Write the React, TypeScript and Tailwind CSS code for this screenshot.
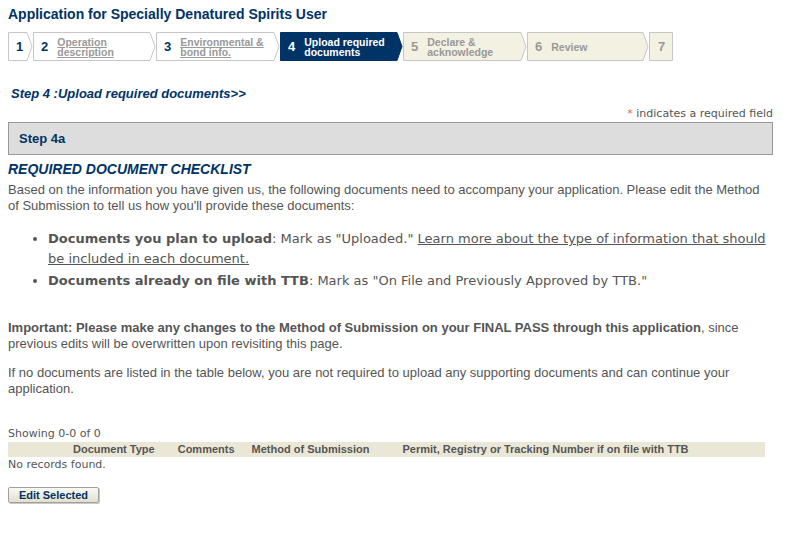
const arial = "font-['Liberation_Sans',Arial,sans-serif]";
const verdana = "font-['DejaVu_Sans',Verdana,sans-serif]";

type Step = { n: string; label?: string; w: number; kind: "done" | "current" | "todo"; last?: boolean };

const steps: Step[] = [
  { n: "1", w: 25, kind: "done" },
  { n: "2", label: "Operation\ndescription", w: 123, kind: "done" },
  { n: "3", label: "Environmental &\nbond info.", w: 124, kind: "done" },
  { n: "4", label: "Upload required\ndocuments", w: 123, kind: "current" },
  { n: "5", label: "Declare &\nacknowledge", w: 124, kind: "todo" },
  { n: "6", label: "Review", w: 122, kind: "todo" },
  { n: "7", w: 24, kind: "todo", last: true },
];

function Chevron({ w, kind, last }: { w: number; kind: Step["kind"]; last?: boolean }) {
  const fill = kind === "current" ? "#003366" : kind === "todo" ? "#f3f1e1" : "#ffffff";
  const stroke = kind === "current" ? "#003366" : "#c6c6c6";
  const pts = last
    ? `0.5,0.5 ${w - 0.5},0.5 ${w - 0.5},28.5 0.5,28.5`
    : `0.5,0.5 ${w - 6},0.5 ${w - 1},14.5 ${w - 6},28.5 0.5,28.5`;
  return (
    <svg className="absolute inset-0" width={w} height={29}>
      <polygon points={pts} fill={fill} stroke={stroke} strokeWidth={1} />
    </svg>
  );
}

function StepBar() {
  return (
    <div className={`flex ml-2 mt-[9px] ${arial}`}>
      {steps.map((s) => {
        const numColor =
          s.kind === "current" ? "text-white" : s.kind === "done" ? "text-[#003366]" : "text-[#999999]";
        const labelColor =
          s.kind === "current"
            ? "text-white"
            : s.kind === "done"
            ? "text-[#999999] underline"
            : "text-[#999999]";
        return (
          <div key={s.n} className="relative h-[29px] shrink-0" style={{ width: s.w }}>
            <Chevron w={s.w} kind={s.kind} last={s.last} />
            <div className="relative flex items-center h-full pl-[8px]">
              <span className={`text-[13px] font-bold ${numColor} ${s.last ? "pl-[1px]" : ""}`}>{s.n}</span>
              {s.label && (
                <span
                  className={`ml-[9px] text-[10.5px] font-bold leading-[10px] whitespace-pre ${labelColor}`}
                >
                  {s.label}
                </span>
              )}
            </div>
          </div>
        );
      })}
    </div>
  );
}

export default function App() {
  return (
    <div className={`bg-white w-[797px] min-h-[534px] text-[#555555] ${arial}`}>
      <h1 className="pl-2 pt-[5px] text-[14px] font-bold text-[#003366] leading-[18px]">
        Application for Specially Denatured Spirits User
      </h1>
      <StepBar />
      <div className="pl-[11px] mt-[25px] text-[13px] font-bold italic text-[#003366] leading-[16px]">
        Step 4 :Upload required documents&gt;&gt;
      </div>
      <div className={`mt-[5px] pr-6 text-right text-[11px] leading-[14px] ${verdana}`}>
        <span className="text-[#e8711d]">*</span> indicates a required field
      </div>
      <div className="mx-2 mr-6 mt-[1px] h-[33px] bg-[#dddddd] border border-[#999999] flex items-center pl-[10px]">
        <span className="text-[13px] font-bold text-[#003366]">Step 4a</span>
      </div>
      <div className="px-2 pr-6">
        <div className="mt-[6px] text-[14px] font-bold italic text-[#003366] leading-[17px]">
          REQUIRED DOCUMENT CHECKLIST
        </div>
        <p className="mt-[4px] text-[13px] leading-[16px]">
          Based on the information you have given us, the following documents need to accompany your application.
          Please edit the Method of Submission to tell us how you'll provide these documents:
        </p>
        <ul className={`mt-[15px] pl-[40px] list-disc text-[13px] leading-[20px] space-y-[2px] ${verdana}`}>
          <li>
            <b>Documents you plan to upload</b>: Mark as "Uploaded."{" "}
            <a className="underline">Learn more about the type of information that should be included in each document.</a>
          </li>
          <li>
            <b>Documents already on file with TTB</b>: Mark as "On File and Previously Approved by TTB."
          </li>
        </ul>
        <p className="mt-[29px] text-[13px] leading-[16px]">
          <b>Important: Please make any changes to the Method of Submission on your FINAL PASS through this application</b>,
          since previous edits will be overwritten upon revisiting this page.
        </p>
        <p className="mt-[13px] text-[13px] leading-[16px]">
          If no documents are listed in the table below, you are not required to upload any supporting documents and can
          continue your application.
        </p>
        <div className={`mt-[30px] text-[11px] leading-[14px] ${verdana}`}>Showing 0-0 of 0</div>
        <div className="mt-[1px] mr-2 h-[15px] bg-[#ebe7d7] flex items-center text-[11px] font-bold">
          <span className="ml-[65px]">Document Type</span>
          <span className="ml-[23px]">Comments</span>
          <span className="ml-[17px]">Method of Submission</span>
          <span className="ml-[33px]">Permit, Registry or Tracking Number if on file with TTB</span>
        </div>
        <div className={`mt-[1px] text-[11px] leading-[14px] ${verdana}`}>No records found.</div>
        <button className="mt-[15px] w-[91px] h-[16px] border border-[#a0a0a0] rounded-[2px] bg-gradient-to-b from-[#fbfaf3] to-[#e2dfcc] text-[11px] font-bold text-[#003366] leading-[14px] shadow-[1px_1px_0_#c8c8c8]">
          Edit Selected
        </button>
      </div>
    </div>
  );
}
